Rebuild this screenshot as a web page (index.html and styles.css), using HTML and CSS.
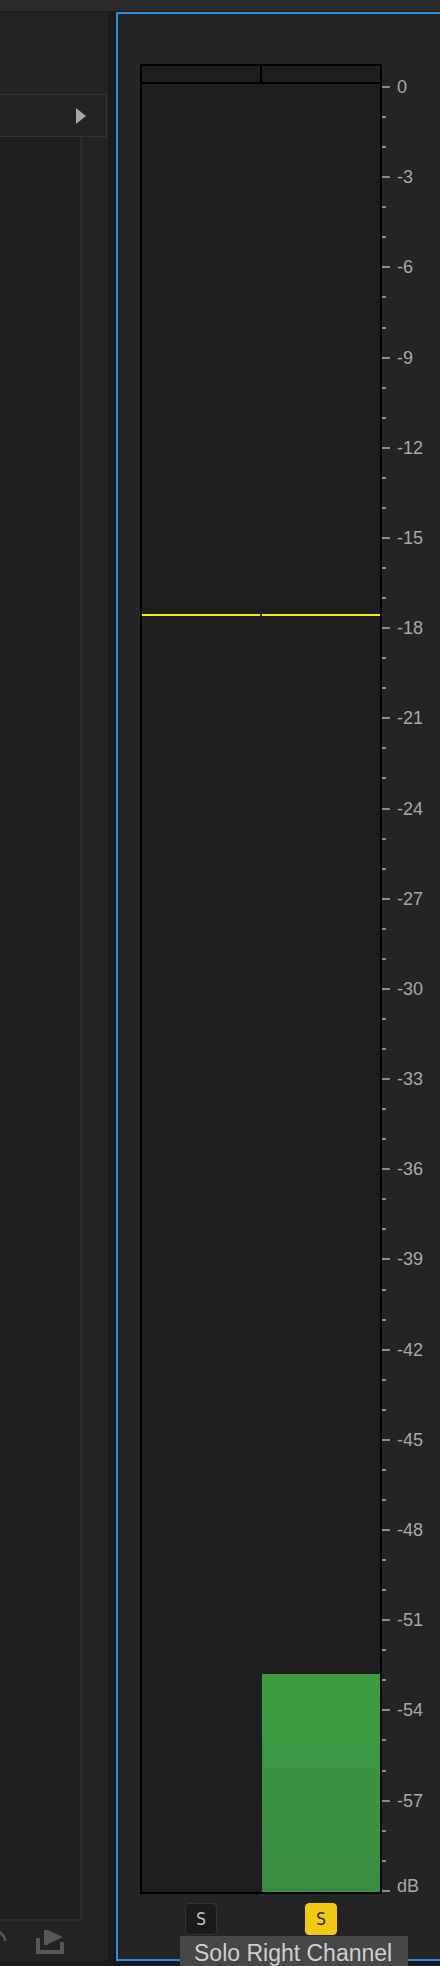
FILE: index.html
```html
<!DOCTYPE html>
<html lang="en">
<head>
<meta charset="UTF-8">
<meta name="viewport" content="width=device-width, initial-scale=1.0">
<title>Audio Meter</title>
<link rel="stylesheet" href="styles.css">
</head>
<body>

<div class="topbar"></div>

<div class="main">
  <aside class="side">
    <div class="dropdown"><span class="arrow"></span></div>
    <div class="list"></div>
    <div class="side-tools">
      <svg class="note" width="16" height="22" viewBox="0 0 16 22">
        <path d="M4 1 V17" stroke="#575757" stroke-width="2.5" fill="none"/>
        <path d="M4 2 C6 6, 12 7, 11 13" stroke="#575757" stroke-width="2.5" fill="none"/>
        <ellipse cx="1" cy="18" rx="4" ry="3" fill="#575757"/>
      </svg>
      <svg class="export" width="28" height="24" viewBox="0 0 28 24">
        <path d="M2 8 V22 H26 V12" fill="none" stroke="#575757" stroke-width="4"/>
        <path d="M8 15 V0 H12 L27 7 L12 14 V15 Z" fill="#575757"/>
      </svg>
    </div>
  </aside>

  <section class="panel">
    <div class="meter-row">
      <div class="meter">
        <div class="meter-head">
          <div class="head-cell"></div>
          <div class="head-cell"></div>
        </div>
        <div class="meter-body">
          <div class="channel">
            <div class="peak"></div>
          </div>
          <div class="channel">
            <div class="peak"></div>
            <div class="level" style="height: 218px"></div>
          </div>
        </div>
      </div>

      <div class="scale">
        <div class="tick"><i></i><span>0</span></div>
        <div class="tick minor"><i></i></div>
        <div class="tick minor"><i></i></div>
        <div class="tick"><i></i><span>-3</span></div>
        <div class="tick minor"><i></i></div>
        <div class="tick minor"><i></i></div>
        <div class="tick"><i></i><span>-6</span></div>
        <div class="tick minor"><i></i></div>
        <div class="tick minor"><i></i></div>
        <div class="tick"><i></i><span>-9</span></div>
        <div class="tick minor"><i></i></div>
        <div class="tick minor"><i></i></div>
        <div class="tick"><i></i><span>-12</span></div>
        <div class="tick minor"><i></i></div>
        <div class="tick minor"><i></i></div>
        <div class="tick"><i></i><span>-15</span></div>
        <div class="tick minor"><i></i></div>
        <div class="tick minor"><i></i></div>
        <div class="tick"><i></i><span>-18</span></div>
        <div class="tick minor"><i></i></div>
        <div class="tick minor"><i></i></div>
        <div class="tick"><i></i><span>-21</span></div>
        <div class="tick minor"><i></i></div>
        <div class="tick minor"><i></i></div>
        <div class="tick"><i></i><span>-24</span></div>
        <div class="tick minor"><i></i></div>
        <div class="tick minor"><i></i></div>
        <div class="tick"><i></i><span>-27</span></div>
        <div class="tick minor"><i></i></div>
        <div class="tick minor"><i></i></div>
        <div class="tick"><i></i><span>-30</span></div>
        <div class="tick minor"><i></i></div>
        <div class="tick minor"><i></i></div>
        <div class="tick"><i></i><span>-33</span></div>
        <div class="tick minor"><i></i></div>
        <div class="tick minor"><i></i></div>
        <div class="tick"><i></i><span>-36</span></div>
        <div class="tick minor"><i></i></div>
        <div class="tick minor"><i></i></div>
        <div class="tick"><i></i><span>-39</span></div>
        <div class="tick minor"><i></i></div>
        <div class="tick minor"><i></i></div>
        <div class="tick"><i></i><span>-42</span></div>
        <div class="tick minor"><i></i></div>
        <div class="tick minor"><i></i></div>
        <div class="tick"><i></i><span>-45</span></div>
        <div class="tick minor"><i></i></div>
        <div class="tick minor"><i></i></div>
        <div class="tick"><i></i><span>-48</span></div>
        <div class="tick minor"><i></i></div>
        <div class="tick minor"><i></i></div>
        <div class="tick"><i></i><span>-51</span></div>
        <div class="tick minor"><i></i></div>
        <div class="tick minor"><i></i></div>
        <div class="tick"><i></i><span>-54</span></div>
        <div class="tick minor"><i></i></div>
        <div class="tick minor"><i></i></div>
        <div class="tick"><i></i><span>-57</span></div>
        <div class="tick minor"><i></i></div>
        <div class="tick minor"><i></i></div>
        <div class="tick"><i></i><span class="unit">dB</span></div>
      </div>
    </div>

    <div class="solo-row">
      <div class="solo-cell"><button class="solo">S</button></div>
      <div class="solo-cell"><button class="solo on">S</button></div>
    </div>
  </section>
</div>

<div class="tooltip">Solo Right Channel</div>

</body>
</html>
```

FILE: styles.css
```css
body {
  margin: 0;
  width: 440px;
  height: 1966px;
  overflow: hidden;
  position: relative;
  background-color: #1b1b1b;
  font-family: "Liberation Sans", Arial, sans-serif;
}
.topbar {
  height: 11px;
  background-color: #2a2a2a;
}
.main {
  display: flex;
  gap: 8px;
  margin-top: 1px;
  height: 1949px;
}

/* left panel */
.side {
  width: 108px;
  flex-shrink: 0;
  background-color: #232323;
  display: flex;
  flex-direction: column;
  padding-top: 82px;
  box-sizing: border-box;
}
.dropdown {
  width: 107px;
  height: 43px;
  box-sizing: border-box;
  border: 1px solid #333;
  border-left: none;
  display: flex;
  align-items: center;
  justify-content: flex-end;
  padding-right: 20px;
}
.arrow {
  width: 0;
  height: 0;
  border-left: 10px solid #a6a6a6;
  border-top: 8px solid transparent;
  border-bottom: 8px solid transparent;
}
.list {
  width: 82px;
  flex: 1;
  box-sizing: border-box;
  background-color: #1f1f1f;
  border-right: 2px solid #2c2c2c;
  border-bottom: 2px solid #2c2c2c;
}
.side-tools {
  height: 40px;
  display: flex;
  align-items: center;
  gap: 26px;
}
.note {
  display: block;
  margin-left: -6px;
  margin-top: -4px;
}
.export {
  display: block;
  margin-top: 1px;
}

/* meter panel */
.panel {
  flex: 1;
  box-sizing: border-box;
  border: 2px solid #3189e0;
  border-right: none;
  background-color: #242424;
  padding: 50px 0 0 22px;
}
.meter-row {
  display: flex;
  align-items: flex-start;
}
.meter {
  width: 242px;
  box-sizing: border-box;
  border: 2px solid #000;
  background-color: #1e1e1e;
}
.meter-head {
  display: flex;
  height: 16px;
  border-bottom: 2px solid #000;
}
.head-cell {
  width: 118px;
}
.head-cell + .head-cell {
  border-left: 2px solid #000;
}
.meter-body {
  display: flex;
  gap: 2px;
  height: 1808px;
}
.channel {
  width: 118px;
  display: flex;
  flex-direction: column;
}
.peak {
  margin-top: 530px;
  height: 2px;
  background-color: #f2ef0a;
}
.level {
  margin-top: auto;
  background: linear-gradient(#3c9d3e, #398c41);
}

/* dB scale */
.scale {
  height: 1806px;
  margin-top: 22px;
  display: flex;
  flex-direction: column;
  justify-content: space-between;
}
.tick {
  display: flex;
  align-items: center;
  height: 2px;
}
.tick i {
  width: 8px;
  height: 2px;
  background-color: #8c8c8c;
}
.tick.minor i {
  width: 4px;
}
.tick span {
  margin-left: 7px;
  font-size: 18px;
  line-height: 2px;
  color: #a8a8a8;
  white-space: nowrap;
}
.tick span.unit {
  margin-bottom: 10px;
}

/* solo buttons */
.solo-row {
  display: flex;
  gap: 2px;
  margin-top: 9px;
  padding-left: 2px;
}
.solo-cell {
  width: 118px;
  display: flex;
  justify-content: center;
}
.solo {
  width: 32px;
  height: 32px;
  padding: 0;
  border: 1px solid #333;
  border-radius: 4px;
  background-color: #1b1b1b;
  color: #c4c4c4;
  font-family: "DejaVu Sans Mono", monospace;
  font-size: 17px;
}
.solo.on {
  background-color: #f3c912;
  border-color: #f3c912;
  color: #2e2a10;
}

.tooltip {
  position: absolute;
  left: 180px;
  top: 1936px;
  width: 228px;
  box-sizing: border-box;
  padding: 6px 0 6px 14px;
  background-color: #474747;
  color: #cfcfcf;
  font-size: 23px;
  line-height: 1;
  white-space: nowrap;
}
```
